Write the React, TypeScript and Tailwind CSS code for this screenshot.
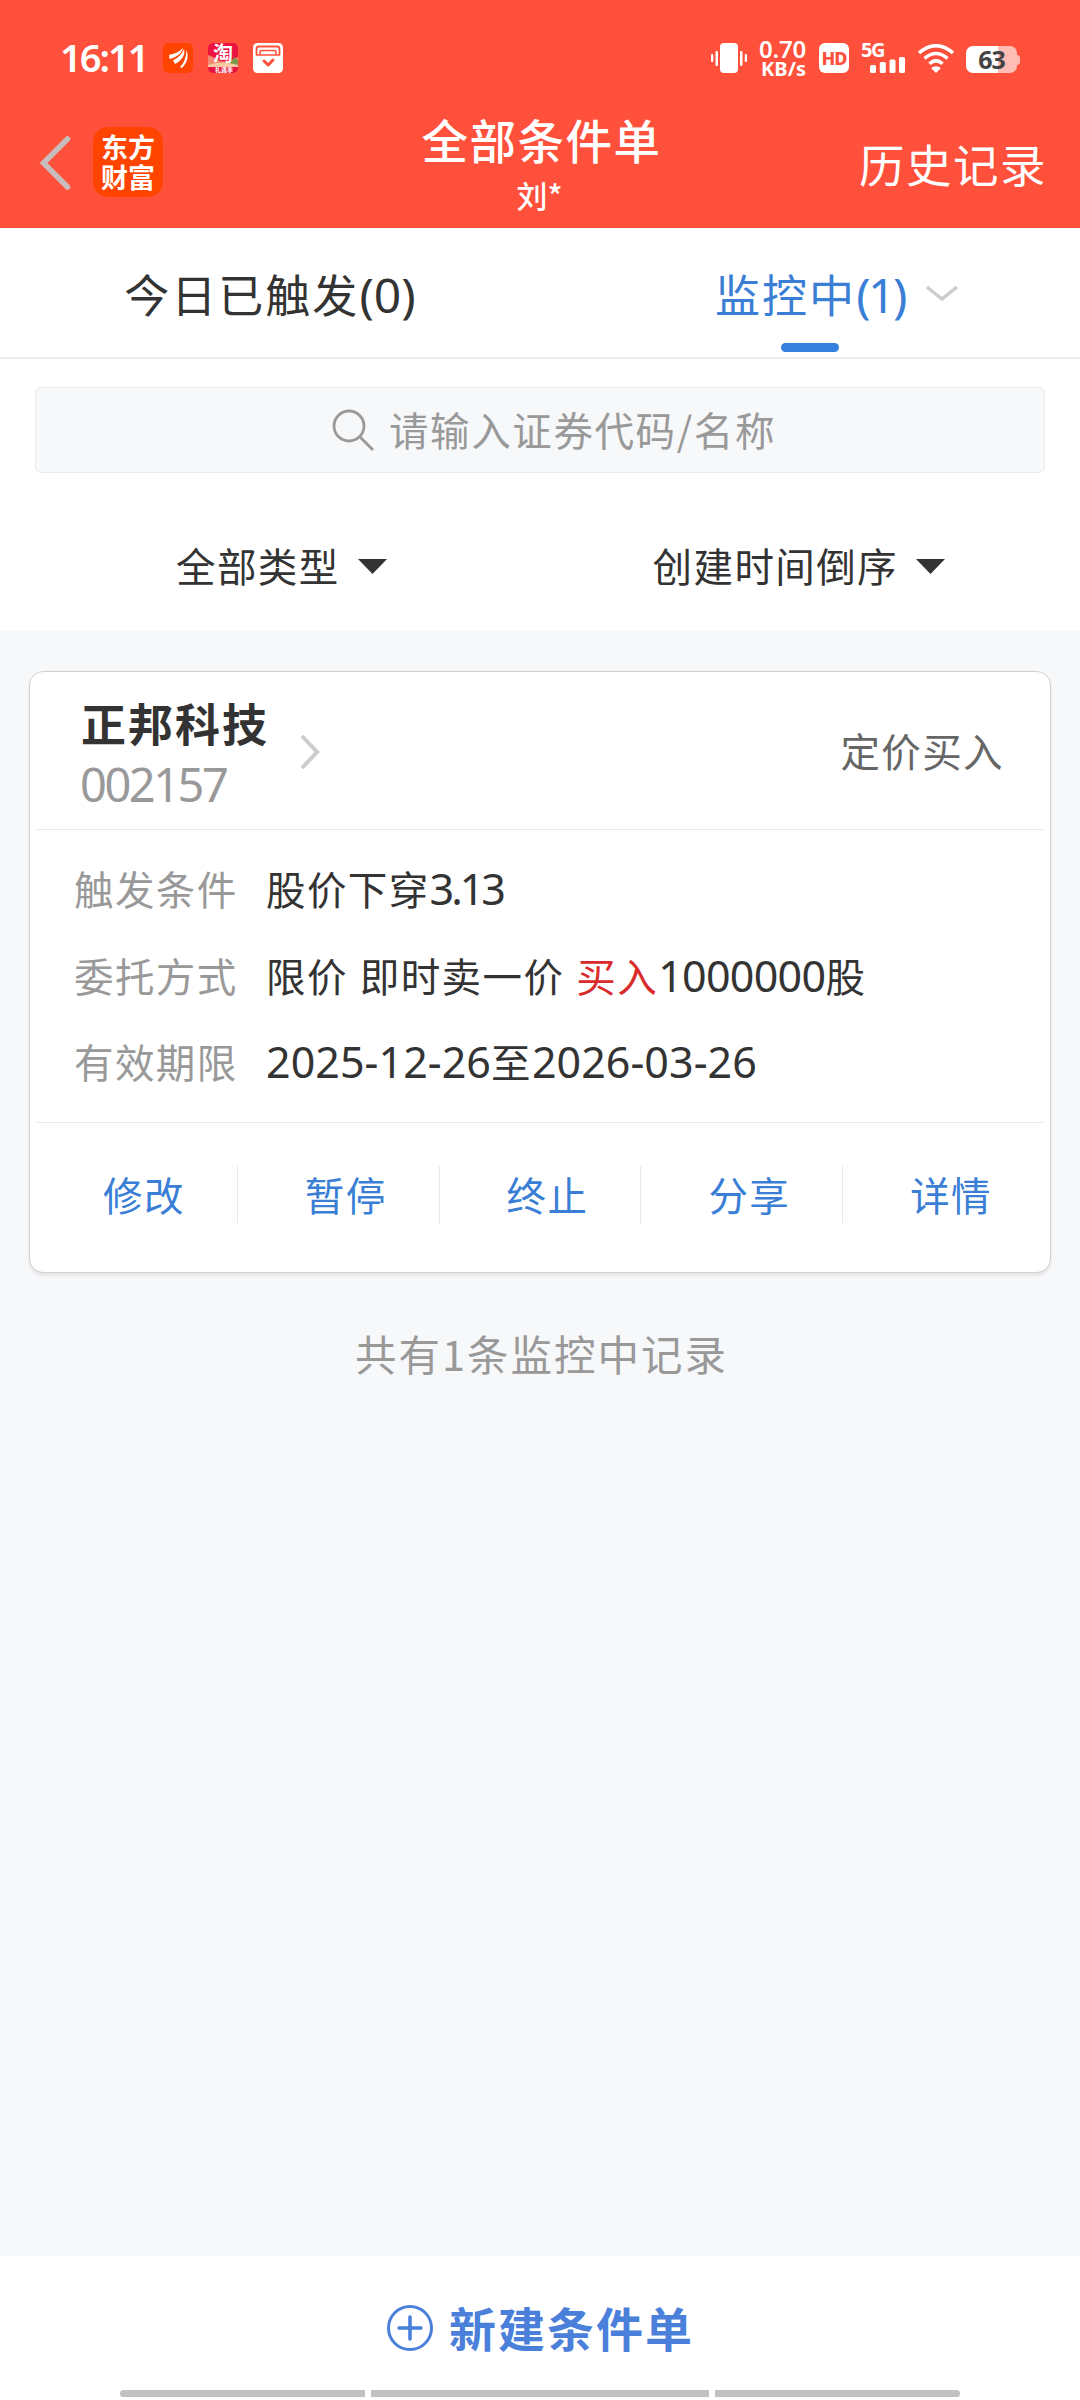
import React from 'react';

const orderRows = [
  {
    label: '触发条件',
    value: (
      <>
        股价下穿<Num className="-tracking-[3px]">3.13</Num>
      </>
    ),
  },
  {
    label: '委托方式',
    value: (
      <>
        限价<span className="inline-block w-[12px]" />即时卖一价
        <span className="inline-block w-[12px]" />
        <span className="text-[#d92b2b]">买入</span>
        <Num className="-tracking-[0.7px]">1000000</Num>股
      </>
    ),
  },
  {
    label: '有效期限',
    value: (
      <>
        <Num className="tracking-[0.05px]">2025-12-26</Num>至<Num className="tracking-[0.05px]">2026-03-26</Num>
      </>
    ),
  },
];

const actions = ['修改', '暂停', '终止', '分享', '详情'];

function Num({ children, className }: { children: React.ReactNode; className: string }) {
  return <span className={`font-['Noto_Sans'] text-[43px] ${className}`}>{children}</span>;
}

const StatusBar: React.FC = () => {
  return (
    <div className="flex h-[84px] items-start justify-between pl-[60px] pr-[60px] pt-[40px] font-['Noto_Sans'] text-white">
      <div className="flex items-start">
        <span className="w-[103px] text-[38px] font-semibold leading-[34px] -tracking-[2px]">16:11</span>
        <svg className="mt-[3px]" width="30" height="30" viewBox="0 0 30 30">
          <rect width="30" height="30" rx="5" fill="#ff4400" />
          <path d="M6 12C11 11 16 9 20 5C19 10 14 14 6.500 16Z" fill="#fff" />
          <path d="M10 17.500C15 15 19 11 21 6C23 12 18 18 12 21Z" fill="#fff" />
          <path d="M17 24C21 20 23 15 23.500 7C26 14 24 20 19 25Z" fill="#fff" />
        </svg>
        <div className="relative ml-[15px] mt-[3px] h-[30px] w-[30px] rounded-[5px] bg-[#ec1440] font-['Noto_Sans_CJK_SC'] font-bold">
          <svg className="absolute inset-0" width="30" height="30" viewBox="0 0 30 30">
            <path d="M0 12L5 14L12 18L22 19L30 14V23H0Z" fill="#f08a72" />
            <path d="M21 20L27 14L30 18V23H21Z" fill="#7a9a4a" />
            <path d="M0 22Q14 17 30 22V24H0Z" fill="#f9c9a0" />
          </svg>
          <span className="absolute left-[5px] top-0 text-[20px] leading-[20px]">淘</span>
          <span className="absolute left-[7px] top-[23px] whitespace-nowrap text-[6px] leading-[7px]">礼遇季</span>
        </div>
        <svg className="ml-[15px] mt-[3px]" width="30" height="30" viewBox="0 0 30 30" fill="none">
          <rect width="30" height="30" rx="4.500" fill="#fff" />
          <path d="M3.500 12V6Q3.500 3.500 6 3.500H24Q26.500 3.500 26.500 6V12" stroke="#ff503b" strokeWidth="1.800" />
          <path d="M3 12H6.500M23.500 12H27" stroke="#ff503b" strokeWidth="1.600" />
          <path d="M7 12V9Q7 7.500 8.500 7.500H21.500Q23 7.500 23 9V12Z" stroke="#ff503b" strokeWidth="1.600" />
          <path d="M11 18L15.200 22L20 17" stroke="#ff503b" strokeWidth="3" strokeLinecap="round" strokeLinejoin="round" />
        </svg>
      </div>

      <div className="flex items-start">
        <svg className="mt-[3px]" width="36" height="30" viewBox="0 0 36 30" fill="#fff">
          <rect x="9" width="18" height="30" rx="4" />
          <rect x="4.500" y="8" width="2.500" height="15" rx="1" />
          <rect y="11" width="2.300" height="8" rx="1" />
          <rect x="29" y="8" width="2.500" height="15" rx="1" />
          <rect x="33.700" y="11" width="2.300" height="8" rx="1" />
        </svg>
        <div className="ml-[10px] w-[49px] text-right font-bold">
          <div className="text-[24px] font-semibold leading-[17px] -tracking-[0.2px]">0.70</div>
          <div className="mt-[2px] text-[20px] leading-[19px]">KB/s</div>
        </div>
        <div className="ml-[13px] mt-[3px] flex h-[30px] w-[30px] items-center justify-center rounded-[6px] bg-white text-[18px] font-extrabold leading-none -tracking-[1px] text-[#ff503b]">
          HD
        </div>
        <div className="relative ml-[12px] h-[34px] w-[46px]">
          <span className="absolute -top-[1px] left-0 text-[20px] font-bold leading-[22px] -tracking-[1.500px]">5G</span>
          <svg className="absolute left-0 top-0" width="46" height="34" viewBox="0 0 46 34" fill="#fff">
            <rect x="9" y="25" width="6" height="8" rx="1.500" />
            <rect x="18.800" y="22" width="6" height="11" rx="1.500" />
            <rect x="28.500" y="19.500" width="6" height="13.500" rx="1.500" />
            <rect x="38" y="17" width="6" height="16" rx="1.500" />
          </svg>
        </div>
        <svg className="ml-[11px] mt-[4px]" width="36" height="29" viewBox="0 0 36 29" fill="none" stroke="#fff" strokeWidth="3.600">
          <path d="M1 9Q18 -5.500 35 9" />
          <path d="M6.500 14.500Q18 4.500 29.500 14.500" />
          <path d="M11.500 19.800Q18 13.700 24.500 19.800" />
          <path d="M18 29L13 24Q18 20.500 23 24Z" fill="#fff" stroke="none" />
        </svg>
        <div className="ml-[12px] mt-[6px] flex">
          <div className="h-[27px] w-[51px] rounded-[7px] bg-linear-to-r from-white from-63% to-[#ffbdb5] to-63% text-center text-[25px] font-bold leading-[27px] -tracking-[1px] text-[#444]">
            63
          </div>
          <div className="my-auto h-[10px] w-[3px] rounded-r bg-[#ffbdb5]" />
        </div>
      </div>
    </div>
  );
};

const Header: React.FC = () => {
  return (
    <header className="h-[228px] bg-[#ff503b] text-white">
      <StatusBar />
      <div className="flex">
        <div className="flex flex-1 pl-[39px] pt-[43px]">
          <svg className="mt-[9px]" width="32" height="54" viewBox="0 0 32 54" fill="none">
            <path d="M28.500 3L4.500 27L28.500 51" stroke="#c9bcbc" strokeWidth="5.500" strokeLinecap="round" />
          </svg>
          <div className="ml-[22px] h-[70px] w-[70px] rounded-[15px] bg-[#ff4400] pt-[5px] text-center text-[27px] font-bold leading-[29.500px]">
            <div>东方</div>
            <div>财富</div>
          </div>
        </div>
        <div className="-ml-[3px] text-center">
          <h1 className="mt-[27px] text-[46.500px] font-medium leading-[56px] tracking-[1.500px]">全部条件单</h1>
          <p className="mt-[8px] pr-[4px] text-[31px] font-medium leading-[40px]">刘*</p>
        </div>
        <div className="flex-1 pr-[33px] pt-[51px] text-right text-[45.500px] leading-[56px] tracking-[1.500px]">历史记录</div>
      </div>
    </header>
  );
};

const Tabs: React.FC = () => {
  return (
    <div className="flex h-[131px] border-b-2 border-[#ededed] text-[45px] leading-[131px]">
      <div className="flex-1 text-center tracking-[2px]">
        今日已触发<span className="font-['Noto_Sans'] text-[48px] tracking-normal">(0)</span>
      </div>
      <div className="relative flex flex-1 justify-center text-[#3a7fd5]">
        <span className="tracking-[2px]">
          监控中<span className="font-['Noto_Sans'] text-[48px] -tracking-[2.500px]">(1)</span>
        </span>
        <svg className="absolute left-[385px] top-[56px]" width="34" height="20" viewBox="0 0 34 20" fill="none">
          <path d="M2 3L17 15L32 3" stroke="#ccc" strokeWidth="3.500" />
        </svg>
        <div className="absolute bottom-[5px] left-[241px] h-[9px] w-[58px] rounded-full bg-[#3680e0]" />
      </div>
    </div>
  );
};

const SearchBar: React.FC = () => {
  return (
    <div className="mx-[35px] mt-[28px] flex h-[86px] items-center rounded-md border border-[#ebebeb] bg-[#f7f8fa] pl-[296px] text-[39.500px] tracking-[1.600px] text-[#999]">
      <svg width="42" height="42" viewBox="0 0 42 42" fill="none" stroke="#999" strokeWidth="2.800">
        <circle cx="17" cy="17" r="15" />
        <path d="M27.500 27.500L41 41" />
      </svg>
      <span className="-mt-[2px] ml-[15px]">请输入证券代码/名称</span>
    </div>
  );
};

const Caret: React.FC = () => (
  <svg className="ml-[18px] mt-[23px]" width="29" height="15" viewBox="0 0 29 15">
    <path d="M0 0H29L14.500 15Z" fill="#333" />
  </svg>
);

const Filters: React.FC = () => {
  return (
    <div className="mt-[63px] flex h-[94px] pl-[176px] text-[39.500px] leading-[58px] tracking-[1.400px]">
      <div className="flex">
        全部类型
        <Caret />
      </div>
      <div className="ml-[266px] flex">
        创建时间倒序
        <Caret />
      </div>
    </div>
  );
};

const OrderCard: React.FC = () => {
  return (
    <div className="mx-[29px] h-[602px] rounded-[14px] border border-[#cfcfcf] bg-white px-[6px] shadow-[0_3px_3px_rgba(0,0,0,0.07)]">
      <div className="flex h-[158px] border-b border-[#e8e8e8] pl-[45px] pr-[40px]">
        <div>
          <h2 className="mt-[21px] text-[45px] font-bold leading-[60px] tracking-[2px]">正邦科技</h2>
          <p className="-ml-[1px] font-['Noto_Sans'] text-[47px] leading-[62px] -tracking-[2.500px] text-[#999]">002157</p>
        </div>
        <svg className="ml-[30px] mt-[61px]" width="22" height="38" viewBox="0 0 22 38" fill="none">
          <path d="M3 3L18 19L3 35" stroke="#ccc" strokeWidth="4" />
        </svg>
        <span className="ml-auto mt-[49px] text-[39.500px] leading-[58px] tracking-[1.400px] text-[#666]">定价买入</span>
      </div>

      <div className="h-[293px] border-b border-[#ebebeb] pl-[38px] pt-[15px]">
        {orderRows.map((row) => (
          <div key={row.label} className="flex h-[86.500px] whitespace-nowrap text-[39.500px] leading-[86px] tracking-[1.400px]">
            <span className="w-[192px] text-[#999]">{row.label}</span>
            <span>{row.value}</span>
          </div>
        ))}
      </div>

      <div className="flex pt-[43px]">
        {actions.map((action) => (
          <div
            key={action}
            className="h-[57px] flex-1 border-r border-[#e8e8e8] pl-[15px] text-center text-[39.500px] leading-[55px] tracking-[1.400px] text-[#3a7fd5] last:border-r-0"
          >
            {action}
          </div>
        ))}
      </div>
    </div>
  );
};

const Footer: React.FC = () => {
  return (
    <footer className="flex h-[144px] flex-col justify-between bg-white pb-[3px]">
      <div className="flex pl-[386px] pt-[48px] text-[#4a7fda]">
        <svg width="48" height="48" viewBox="0 0 48 48" fill="none" stroke="#4a7fda" strokeWidth="3">
          <circle cx="24" cy="24" r="21.500" />
          <path d="M13 24H35M24 13V35" strokeWidth="3.600" strokeLinecap="round" />
        </svg>
        <span className="ml-[15px] text-[47px] font-bold leading-[46px] tracking-[2px]">新建条件单</span>
      </div>
      {/* gesture bar */}
      <div className="mx-[120px] flex h-[7px] gap-[6px]">
        <div className="w-[245px] rounded-l-full bg-[#c1c1c1]" />
        <div className="flex-1 bg-[#c1c1c1]" />
        <div className="w-[245px] rounded-r-full bg-[#c1c1c1]" />
      </div>
    </footer>
  );
};

const App: React.FC = () => {
  return (
    <div className="flex h-[2400px] w-[1080px] flex-col overflow-hidden bg-[#f7f8fa] font-['Noto_Sans_CJK_SC',sans-serif] text-[#333]">
      <Header />
      <div className="h-[403px] bg-white">
        <Tabs />
        <SearchBar />
        <Filters />
      </div>
      <main className="flex-1 pt-[40px]">
        <OrderCard />
        <p className="mt-[50px] pl-[3px] text-center text-[41.500px] leading-[60px] tracking-[2px] text-[#999]">共有1条监控中记录</p>
      </main>
      <Footer />
    </div>
  );
};

export default App;
